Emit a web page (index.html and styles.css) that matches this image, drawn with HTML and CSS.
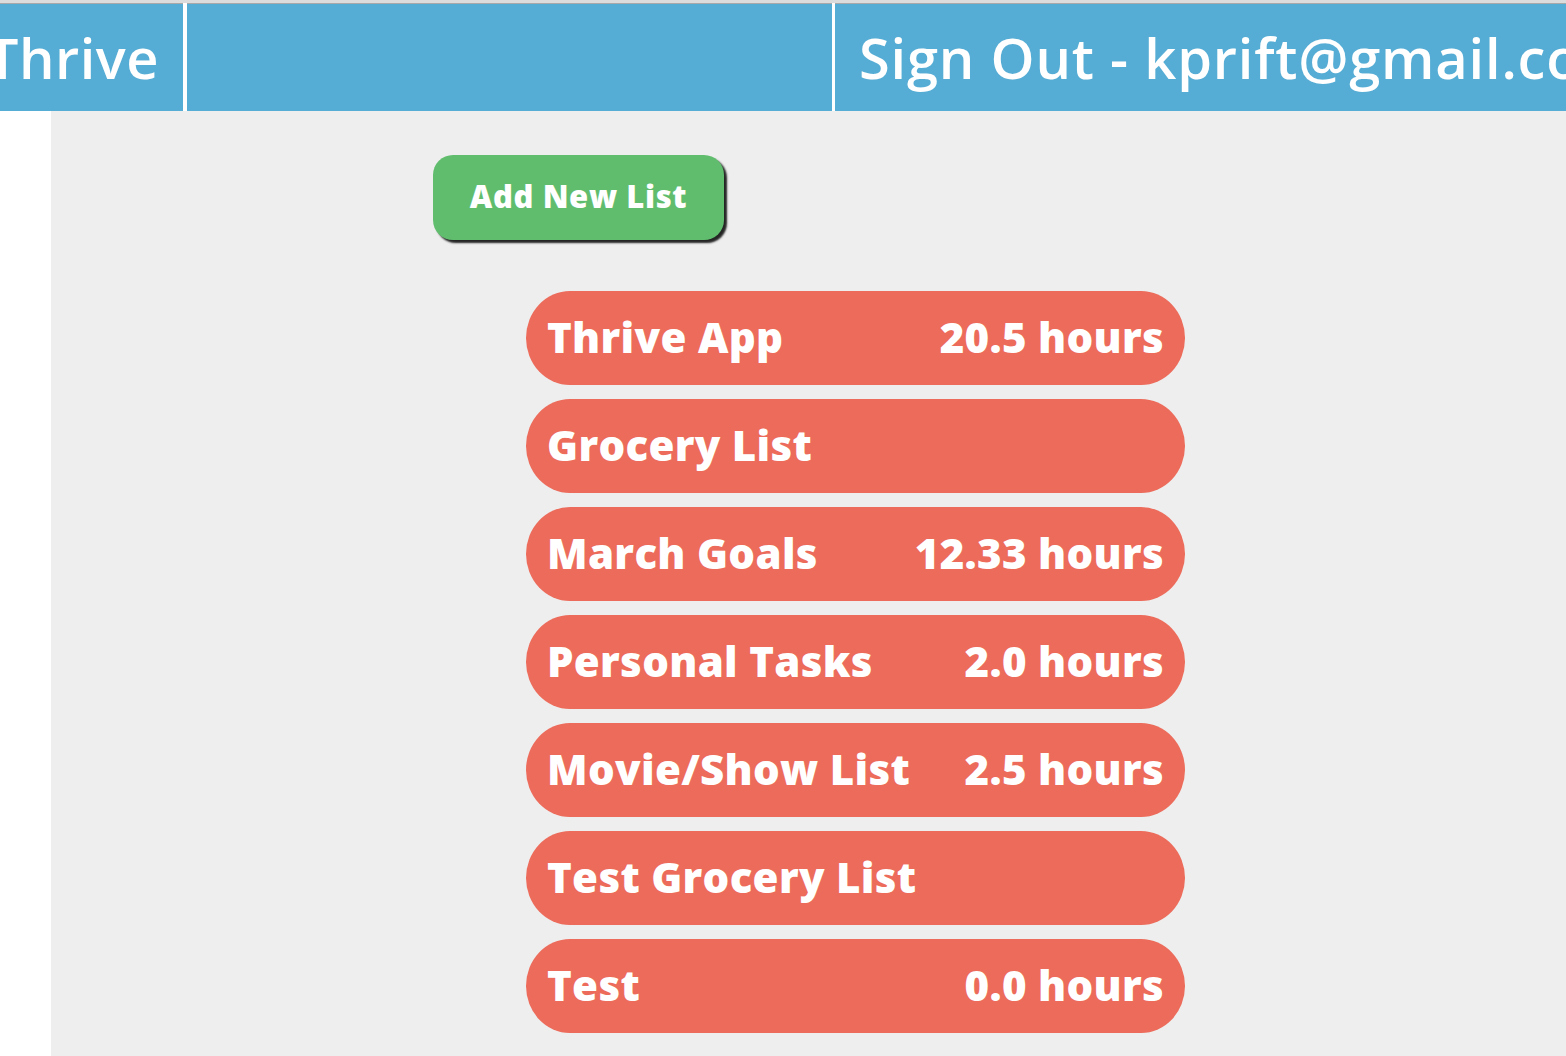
FILE: index.html
```html
<!DOCTYPE html>
<html>
<head>
<meta charset="utf-8">
<title>Thrive</title>
<link rel="stylesheet" href="styles.css">
</head>
<body>
<header class="topbar">
  <div class="cell brand"><span class="brand-text">Thrive</span></div>
  <div class="cell spacer"></div>
  <div class="cell account"><span class="account-text">Sign Out - kprift@gmail.com</span></div>
</header>
<div class="page">
  <aside class="gutter"></aside>
  <main class="content">
    <div class="actions">
      <button class="add-btn">Add New List</button>
    </div>
    <ul class="lists">
      <li class="list-item"><span class="name">Thrive App</span><span class="hours">20.5 hours</span></li>
      <li class="list-item"><span class="name">Grocery List</span><span class="hours"></span></li>
      <li class="list-item"><span class="name">March Goals</span><span class="hours">12.33 hours</span></li>
      <li class="list-item"><span class="name">Personal Tasks</span><span class="hours">2.0 hours</span></li>
      <li class="list-item"><span class="name">Movie/Show List</span><span class="hours">2.5 hours</span></li>
      <li class="list-item"><span class="name">Test Grocery List</span><span class="hours"></span></li>
      <li class="list-item"><span class="name">Test</span><span class="hours">0.0 hours</span></li>
    </ul>
  </main>
</div>
</body>
</html>
```
FILE: styles.css
```css
html, body {
  margin: 0;
  padding: 0;
  height: 100%;
}
body {
  background: #ffffff;
  font-family: "Open Sans", "DejaVu Sans", sans-serif;
  overflow: hidden;
  display: flex;
  flex-direction: column;
}
.topbar {
  display: flex;
  height: 108px;
  background: #55acd4;
  border-top: 3px solid #dcdcdc;
  box-shadow: inset 0 1px 0 #a8a8a8;
  flex: none;
  overflow: hidden;
}
.cell {
  display: flex;
  align-items: center;
  height: 100%;
  overflow: hidden;
  white-space: nowrap;
}
.brand {
  width: 183px;
  justify-content: flex-end;
}
.brand-text {
  color: #fff;
  font-size: 56px;
  font-weight: 600;
  letter-spacing: 0.5px;
  margin-right: 24px;
}
.spacer {
  width: 645px;
  border-left: 4px solid #fff;
}
.account {
  flex: 1;
  border-left: 3px solid #fff;
  padding-left: 24px;
}
.account-text {
  color: #fff;
  font-size: 56px;
  font-weight: 600;
  letter-spacing: 0.8px;
}
.page {
  flex: 1;
  display: flex;
}
.gutter {
  width: 51px;
  background: #fff;
  flex: none;
}
.content {
  flex: 1;
  background: #eeeeee;
  padding-top: 44px;
}
.actions {
  padding-left: 382px;
}
.add-btn {
  width: 291px;
  height: 85px;
  border: none;
  border-radius: 20px;
  background: #61bd6e;
  color: #fff;
  font-family: "Open Sans", "DejaVu Sans", sans-serif;
  font-weight: 800;
  font-size: 31px;
  letter-spacing: 0.6px;
  box-shadow: 3px 3px 2px rgba(0, 0, 0, 0.85);
  padding: 0 0 3px;
}
.lists {
  list-style: none;
  margin: 51px 0 0 475px;
  padding: 0;
  width: 659px;
  display: flex;
  flex-direction: column;
  gap: 14px;
}
.list-item {
  height: 94px;
  box-sizing: border-box;
  background: #ec6b5a;
  border-radius: 44px / 47px;
  display: flex;
  align-items: center;
  justify-content: space-between;
  padding: 0 21px 4px;
  color: #fff;
  font-weight: 800;
  font-size: 42px;
  letter-spacing: 0.3px;
  white-space: nowrap;
}
```
